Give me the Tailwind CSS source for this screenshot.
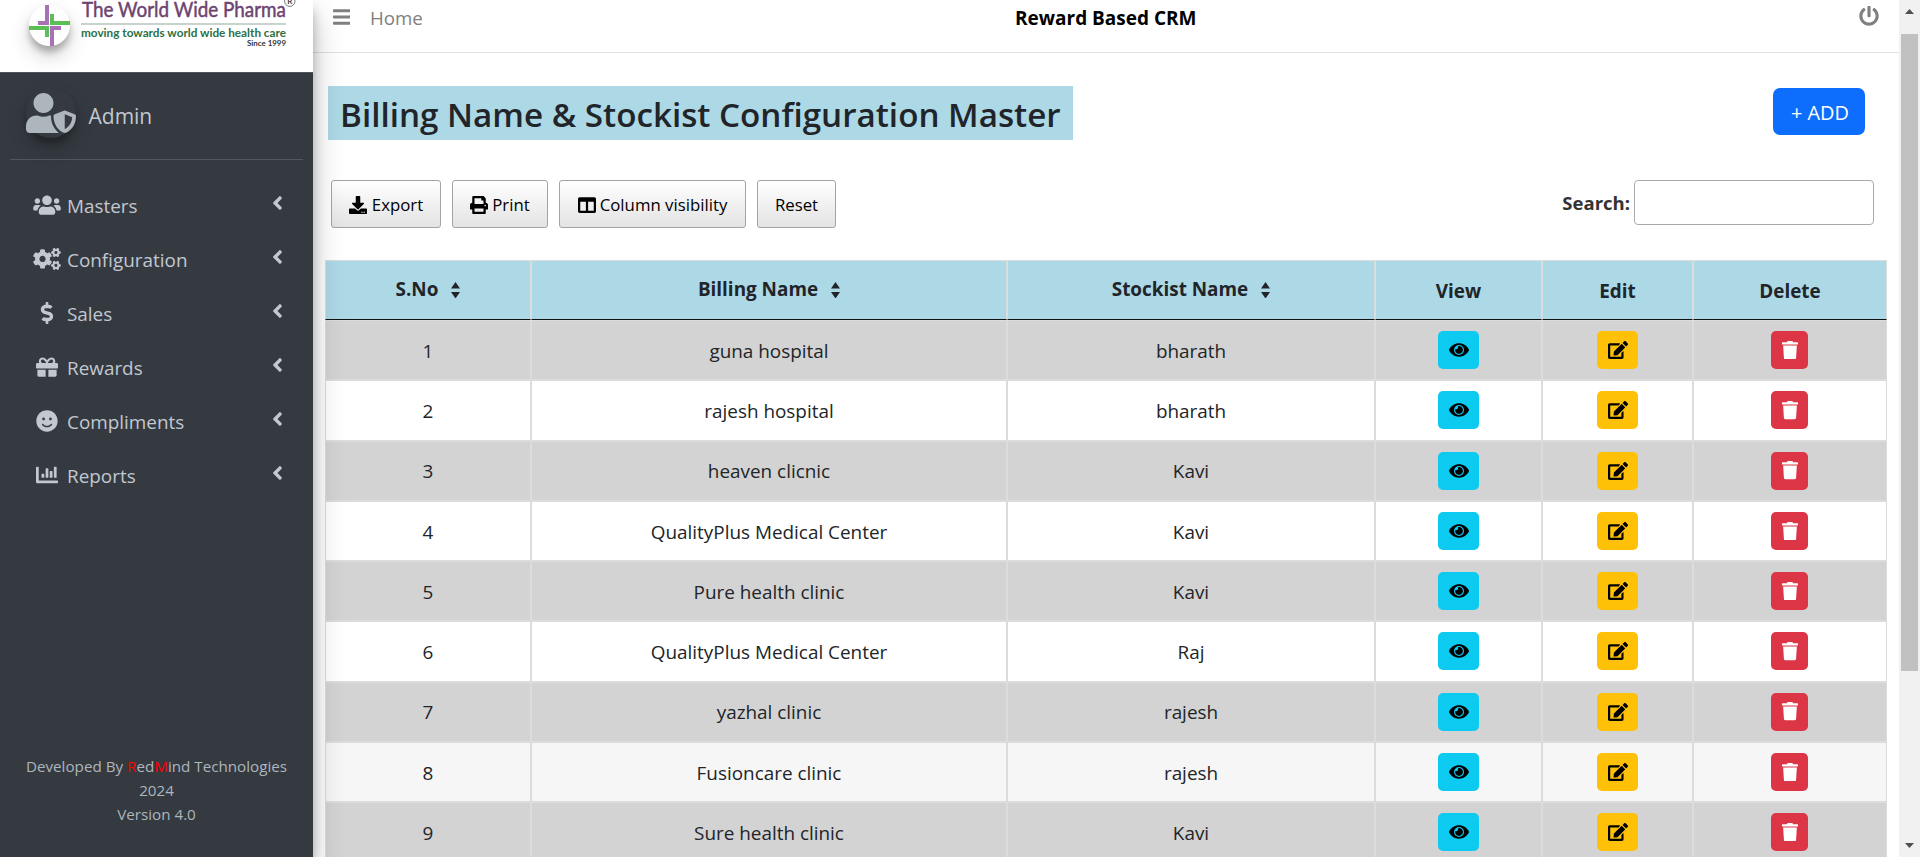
<!DOCTYPE html>
<html lang="en">
<head>
<meta charset="utf-8">
<title>Reward Based CRM</title>
<script src="https://cdn.jsdelivr.net/npm/@tailwindcss/browser@4"></script>
</head>
<body class="h-[857px] overflow-hidden bg-white font-['Open_Sans','Noto_Sans',sans-serif] text-[18.9px] text-[#212529]">

<!-- Icon sprite -->
<svg class="hidden">
  <symbol id="users" viewBox="0 0 640 512"><path d="M96 224c35.3 0 64-28.7 64-64s-28.7-64-64-64-64 28.7-64 64 28.7 64 64 64zm448 0c35.3 0 64-28.7 64-64s-28.7-64-64-64-64 28.7-64 64 28.7 64 64 64zm32 32h-64c-17.6 0-33.5 7.1-45.1 18.6 40.3 22.1 68.9 62 75.1 109.4h66c17.7 0 32-14.3 32-32v-32c0-35.3-28.7-64-64-64zm-256 0c61.9 0 112-50.1 112-112S381.9 32 320 32 208 82.1 208 144s50.1 112 112 112zm76.8 32h-8.3c-20.8 10-43.9 16-68.5 16s-47.6-6-68.5-16h-8.3C179.6 288 128 339.6 128 403.2V432c0 26.5 21.5 48 48 48h288c26.5 0 48-21.5 48-48v-28.8c0-63.6-51.6-115.2-115.2-115.2zm-223.7-13.4C161.5 263.1 145.6 256 128 256H64c-35.3 0-64 28.7-64 64v32c0 17.7 14.3 32 32 32h65.9c6.3-47.4 34.9-87.3 75.2-109.4z"/></symbol>
  <symbol id="cogs" viewBox="0 0 640 512">
    <path id="smallgear" d="M512.1 191l-8.2 14.3c-3 5.3-9.4 7.5-15.1 5.4-11.8-4.4-22.6-10.7-32.1-18.6-4.6-3.8-5.8-10.5-2.8-15.7l8.2-14.3c-6.9-8-12.3-17.3-15.9-27.4h-16.5c-6 0-11.2-4.3-12.2-10.3-2-12-2.1-24.6 0-37.1 1-6 6.2-10.4 12.2-10.4h16.5c3.6-10.1 9-19.4 15.9-27.4l-8.2-14.3c-3-5.2-1.9-11.9 2.8-15.7 9.5-7.9 20.4-14.2 32.1-18.6 5.7-2.1 12.1.1 15.1 5.4l8.2 14.3c10.5-1.9 21.2-1.9 31.7 0L552 6.3c3-5.3 9.4-7.5 15.1-5.4 11.8 4.4 22.6 10.7 32.1 18.6 4.6 3.8 5.8 10.5 2.8 15.7l-8.2 14.3c6.9 8 12.3 17.3 15.9 27.4h16.5c6 0 11.2 4.3 12.2 10.3 2 12 2.1 24.6 0 37.1-1 6-6.2 10.4-12.2 10.4h-16.5c-3.6 10.1-9 19.4-15.9 27.4l8.2 14.3c3 5.2 1.9 11.9-2.8 15.7-9.5 7.9-20.4 14.2-32.1 18.6-5.7 2.1-12.1-.1-15.1-5.4l-8.2-14.3c-10.4 1.9-21.2 1.9-31.7 0zm-10.5-58.8c38.5 29.6 82.4-14.3 52.8-52.8-38.5-29.7-82.4 14.3-52.8 52.8z"/>
    <path d="M386.3 286.1l33.7 16.8c10.1 5.8 14.5 18.1 10.5 29.1-8.9 24.2-26.4 46.4-42.6 65.8-7.4 8.9-20.2 11.1-30.3 5.3l-29.1-16.8c-16 13.7-34.6 24.6-54.9 31.7v33.6c0 11.6-8.3 21.6-19.7 23.6-24.6 4.2-50.4 4.4-75.9 0-11.5-2-20-11.9-20-23.6V418c-20.3-7.2-38.9-18-54.9-31.7L74 403c-10 5.8-22.9 3.6-30.3-5.3-16.2-19.4-33.3-41.6-42.2-65.7-4-10.9.4-23.2 10.5-29.1l33.3-16.8c-3.9-20.9-3.9-42.4 0-63.4L12 205.8c-10.1-5.8-14.6-18.1-10.5-29 8.9-24.2 26-46.4 42.2-65.8 7.4-8.9 20.2-11.1 30.3-5.3l29.1 16.8c16-13.7 34.6-24.6 54.9-31.7V57.1c0-11.5 8.2-21.5 19.6-23.5 24.6-4.2 50.5-4.4 76-.1 11.5 2 20 11.9 20 23.6v33.6c20.3 7.2 38.9 18 54.9 31.7l29.1-16.8c10-5.8 22.9-3.6 30.3 5.3 16.2 19.4 33.2 41.6 42.1 65.8 4 10.9.1 23.2-10 29.1l-33.7 16.8c3.9 21 3.9 42.5 0 63.5zm-117.6 21.1c59.2-77-28.7-164.9-105.7-105.7-59.2 77 28.7 164.9 105.7 105.7z"/>
    <use href="#smallgear" y="299"/>
  </symbol>
  <symbol id="dollar" viewBox="0 0 288 512"><path d="M209.2 233.4l-108-31.6C88.7 198.2 80 186.5 80 173.5c0-16.3 13.2-29.5 29.5-29.5h66.3c12.2 0 24.2 3.7 34.2 10.5 6.1 4.1 14.3 3.1 19.5-2l34.8-34c7.1-6.9 6.1-18.4-1.8-24.5C238 74.8 207.4 64.1 176 64V16c0-8.8-7.2-16-16-16h-32c-8.8 0-16 7.2-16 16v48h-2.5C45.8 64-5.4 118.7.5 183.6c4.2 46.1 39.4 83.6 83.8 96.6l102.5 30c12.5 3.7 21.2 15.3 21.2 28.3 0 16.3-13.2 29.5-29.5 29.5h-66.3C100 368 88 364.3 78 357.5c-6.1-4.1-14.3-3.1-19.5 2l-34.8 34c-7.1 6.9-6.1 18.4 1.8 24.5 24.5 19.2 55.1 29.9 86.5 30v48c0 8.8 7.2 16 16 16h32c8.8 0 16-7.2 16-16v-48.2c46.6-.9 90.3-28.6 105.7-72.7 21.5-61.6-14.6-124.8-72.5-141.7z"/></symbol>
  <symbol id="gift" viewBox="0 0 512 512"><path d="M32 448c0 17.7 14.3 32 32 32h160V320H32v128zm256 32h160c17.7 0 32-14.3 32-32V320H288v160zm192-320h-42.1c6.2-12.1 10.1-25.5 10.1-40 0-48.5-39.5-88-88-88-41.6 0-68.5 21.3-103 68.3-34.5-47-61.4-68.3-103-68.3-48.5 0-88 39.5-88 88 0 14.5 3.8 27.9 10.1 40H32c-17.7 0-32 14.3-32 32v80c0 8.8 7.2 16 16 16h480c8.8 0 16-7.2 16-16v-80c0-17.7-14.3-32-32-32zm-326.1 0c-22.1 0-40-17.9-40-40s17.9-40 40-40c19.9 0 34.6 3.3 86.1 80h-86.1zm206.1 0h-86.1c51.4-76.5 65.7-80 86.1-80 22.1 0 40 17.9 40 40s-17.9 40-40 40z"/></symbol>
  <symbol id="smile" viewBox="0 0 496 512"><path d="M248 8C111 8 0 119 0 256s111 248 248 248 248-111 248-248S385 8 248 8zm80 168c17.7 0 32 14.3 32 32s-14.3 32-32 32-32-14.3-32-32 14.3-32 32-32zm-160 0c17.7 0 32 14.3 32 32s-14.3 32-32 32-32-14.3-32-32 14.3-32 32-32zm194.8 170.2C334.3 380.4 292.5 400 248 400s-86.3-19.6-114.8-53.8c-13.6-16.3 11-36.7 24.6-20.5 22.4 26.9 55.2 42.2 90.2 42.2s67.8-15.4 90.2-42.2c13.4-16.2 38.1 4.2 24.6 20.5z"/></symbol>
  <symbol id="chart" viewBox="0 0 512 512"><path d="M332.8 320h38.4c6.4 0 12.8-6.4 12.8-12.8V172.8c0-6.4-6.4-12.8-12.8-12.8h-38.4c-6.4 0-12.8 6.4-12.8 12.8v134.4c0 6.4 6.4 12.8 12.8 12.8zm96 0h38.4c6.4 0 12.8-6.4 12.8-12.8V76.8c0-6.4-6.4-12.8-12.8-12.8h-38.4c-6.4 0-12.8 6.4-12.8 12.8v230.4c0 6.4 6.4 12.8 12.8 12.8zm-288 0h38.4c6.4 0 12.8-6.4 12.8-12.8v-70.4c0-6.4-6.4-12.8-12.8-12.8h-38.4c-6.4 0-12.8 6.4-12.8 12.8v70.4c0 6.4 6.4 12.8 12.8 12.8zm96 0h38.4c6.4 0 12.8-6.4 12.8-12.8V108.8c0-6.4-6.4-12.8-12.8-12.8h-38.4c-6.4 0-12.8 6.4-12.8 12.8v198.4c0 6.4 6.4 12.8 12.8 12.8zM496 384H64V80c0-8.84-7.16-16-16-16H16C7.16 64 0 71.16 0 80v336c0 17.67 14.33 32 32 32h464c8.84 0 16-7.16 16-16v-32c0-8.84-7.16-16-16-16z"/></symbol>
  <symbol id="angle" viewBox="0 0 256 512"><path d="M31.7 239l136-136c9.4-9.4 24.6-9.4 33.9 0l22.6 22.6c9.4 9.4 9.4 24.6 0 33.9L127.9 256l96.4 96.4c9.4 9.4 9.4 24.6 0 33.9L201.7 409c-9.4 9.4-24.6 9.4-33.9 0l-136-136c-9.5-9.4-9.5-24.6-.1-34z"/></symbol>
  <symbol id="power" viewBox="0 0 512 512"><path d="M400 54.1c63 45 104 118.6 104 201.9 0 136.8-110.8 247.7-247.5 248C120 504.3 8.2 393 8 256.4 7.9 173.1 48.9 99.3 111.8 54.2c11.7-8.3 28-4.8 35 7.7L162.6 90c5.9 10.5 3.1 23.8-6.6 31-41.5 30.8-68 79.6-68 134.9-.1 92.3 74.5 168.1 168 168.1 91.6 0 168.6-74.2 168-169.1-.3-51.8-24.7-101.8-68.1-134-9.7-7.2-12.4-20.5-6.5-30.9l15.8-28.1c7-12.4 23.2-16.1 34.8-7.8zM296 264V24c0-13.3-10.7-24-24-24h-32c-13.3 0-24 10.7-24 24v240c0 13.3 10.7 24 24 24h32c13.3 0 24-10.7 24-24z"/></symbol>
  <symbol id="shield" viewBox="0 0 640 512"><path d="M622.3 271.1l-115.2-45c-4.1-1.6-12.6-3.7-22.2 0l-115.2 45c-10.7 4.2-17.7 14-17.7 24.9 0 111.6 68.7 188.8 132.9 213.9 9.6 3.7 18 1.6 22.2 0C558.4 489.9 640 420.5 640 296c0-10.9-7-20.7-17.7-24.9zM496 462.4V273.3l95.5 37.3c-5.6 87.1-60.9 135.4-95.5 151.8zM224 256c70.7 0 128-57.3 128-128S294.7 0 224 0 96 57.3 96 128s57.3 128 128 128zm96 40c0-2.5.8-4.8 1.1-7.2-2.5-.1-4.9-.8-7.5-.8h-16.7c-22.2 10.2-46.9 16-72.9 16s-50.6-5.8-72.9-16h-16.7C60.2 288 0 348.2 0 422.4V464c0 26.5 21.5 48 48 48h352c6.8 0 13.3-1.5 19.2-4-54-42.9-99.2-116.7-99.2-212z"/></symbol>
  <symbol id="eye" viewBox="0 0 576 512"><path d="M288 144a110.94 110.94 0 0 0-31.24 5 55.4 55.4 0 0 1 7.24 27 56 56 0 0 1-56 56 55.4 55.4 0 0 1-27-7.24A111.71 111.71 0 1 0 288 144zm284.52 97.4C518.29 135.59 410.93 64 288 64S57.68 135.64 3.48 241.41a32.35 32.35 0 0 0 0 29.19C57.71 376.41 165.07 448 288 448s230.32-71.64 284.52-177.41a32.35 32.35 0 0 0 0-29.19zM288 400a144 144 0 1 1 144-144 143.93 143.93 0 0 1-144 144z"/></symbol>
  <symbol id="edit" viewBox="0 0 576 512"><path d="M402.6 83.2l90.2 90.2c3.8 3.8 3.8 10 0 13.8L274.4 405.6l-92.8 10.3c-12.4 1.4-22.9-9.1-21.5-21.5l10.3-92.8L388.8 83.2c3.8-3.8 10-3.8 13.8 0zm162-22.9l-48.8-48.8c-15.2-15.2-39.9-15.2-55.2 0l-35.4 35.4c-3.8 3.8-3.8 10 0 13.8l90.2 90.2c3.8 3.8 10 3.8 13.8 0l35.4-35.4c15.2-15.3 15.2-40 0-55.2zM384 346.2V448H64V128h229.8c3.2 0 6.2-1.3 8.5-3.5l40-40c7.6-7.6 2.2-20.5-8.5-20.5H48C21.5 64 0 85.5 0 112v352c0 26.5 21.5 48 48 48h352c26.5 0 48-21.5 48-48V306.2c0-10.7-12.9-16-20.5-8.5l-40 40c-2.2 2.3-3.5 5.3-3.5 8.5z"/></symbol>
  <symbol id="trash" viewBox="0 0 448 512"><path d="M432 32H312l-9.4-18.700A24 24 0 0 0 281.1 0H166.800a23.720 23.720 0 0 0-21.400 13.300L136 32H16A16 16 0 0 0 0 48v32a16 16 0 0 0 16 16h416a16 16 0 0 0 16-16V48a16 16 0 0 0-16-16zM32 122l21.200 345a48 48 0 0 0 47.900 45h245.800a48 48 0 0 0 47.900-45L416 122H32z"/></symbol>
  <symbol id="download" viewBox="0 0 512 512"><path d="M216 0h80c13.3 0 24 10.7 24 24v168h87.7c17.8 0 26.7 21.5 14.1 34.1L269.7 378.3c-7.5 7.5-19.8 7.5-27.3 0L90.1 226.1c-12.6-12.6-3.7-34.1 14.1-34.1H192V24c0-13.3 10.7-24 24-24zm296 376v112c0 13.3-10.7 24-24 24H24c-13.3 0-24-10.7-24-24V376c0-13.3 10.7-24 24-24h146.7l49 49c20.1 20.1 52.5 20.1 72.6 0l49-49H488c13.3 0 24 10.7 24 24zm-124 88c0-11-9-20-20-20s-20 9-20 20 9 20 20 20 20-9 20-20zm64 0c0-11-9-20-20-20s-20 9-20 20 9 20 20 20 20-9 20-20z"/></symbol>
  <symbol id="print" viewBox="0 0 512 512"><path d="M448 192V77.25c0-8.49-3.37-16.62-9.37-22.63L393.37 9.37c-6-6-14.14-9.37-22.63-9.37H96C78.33 0 64 14.33 64 32v160c-35.35 0-64 28.65-64 64v112c0 8.84 7.16 16 16 16h48v96c0 17.67 14.33 32 32 32h320c17.67 0 32-14.33 32-32v-96h48c8.84 0 16-7.16 16-16V256c0-35.35-28.65-64-64-64zm-64 256H128v-96h256v96zm0-224H128V64h192v48c0 8.84 7.16 16 16 16h48v96zm48 72c-13.25 0-24-10.75-24-24 0-13.26 10.75-24 24-24s24 10.74 24 24c0 13.25-10.75 24-24 24z"/></symbol>
  <symbol id="columns" viewBox="0 0 512 512"><path d="M464 32H48C21.49 32 0 53.49 0 80v352c0 26.51 21.49 48 48 48h416c26.51 0 48-21.49 48-48V80c0-26.51-21.49-48-48-48zM224 416H64V160h160v256zm224 0H288V160h160v256z"/></symbol>
  <symbol id="bars" viewBox="0 0 448 512"><path d="M16 132h416c8.837 0 16-7.163 16-16V76c0-8.837-7.163-16-16-16H16C7.163 60 0 67.163 0 76v40c0 8.837 7.163 16 16 16zm0 160h416c8.837 0 16-7.163 16-16v-40c0-8.837-7.163-16-16-16H16c-8.837 0-16 7.163-16 16v40c0 8.837 7.163 16 16 16zm0 160h416c8.837 0 16-7.163 16-16v-40c0-8.837-7.163-16-16-16H16c-8.837 0-16 7.163-16 16v40c0 8.837 7.163 16 16 16z"/></symbol>
</svg>

<div class="flex h-full">
  <!-- Sidebar -->
  <aside class="relative z-10 flex h-full w-[313px] shrink-0 flex-col bg-[#343a40] shadow-[0_14px_28px_rgba(0,0,0,0.25),0_10px_10px_rgba(0,0,0,0.22)]">
    <div class="flex h-[73px] shrink-0 overflow-hidden border-b border-[#4b545c] bg-white pl-[29px]">
      <div class="mt-[5px] size-[41px] rounded-full bg-white shadow-[0_10px_20px_rgba(0,0,0,0.19),0_6px_6px_rgba(0,0,0,0.23)]">
        <svg class="size-[41px]" viewBox="0 0 41 41">
          <path fill="#a871b5" d="M16 0h4v20H9v-4h7zM21 21h11v4h-7v16h-4z"/>
          <path fill="#5cbf55" d="M21 9h4v7h16v4H21zM0 21h20v11h-4v-7H0z"/>
        </svg>
      </div>
      <svg class="ml-[11px] h-[60px] w-[220px] font-['Lato',sans-serif]" viewBox="0 0 220 60">
        <text x="1" y="16.5" font-size="22" font-weight="400" fill="#6d4470" stroke="#6d4470" stroke-width=".5" textLength="204" lengthAdjust="spacingAndGlyphs">The World Wide Pharma</text>
        <circle cx="208.8" cy="1.2" r="5.2" fill="none" stroke="#555" stroke-width=".8"/>
        <text x="206.3" y="4.2" font-size="8" font-weight="700" fill="#444">R</text>
        <path d="M0 24h205" stroke="#93a79b" stroke-width="1"/>
        <text x="0" y="36.5" font-size="12" font-weight="700" fill="#2c7145" textLength="205" lengthAdjust="spacingAndGlyphs">moving towards world wide health care</text>
        <text x="166" y="46" font-size="8" font-weight="700" fill="#333" textLength="39" lengthAdjust="spacingAndGlyphs">Since 1999</text>
      </svg>
    </div>

    <div class="mx-[10px] flex h-[87px] shrink-0 items-center border-b border-[#4f5962] pl-4 text-[#c2c7d0]">
      <div class="-mt-[6px] flex size-[50px] items-center justify-center rounded-full text-[#adb5bd] shadow-[0_10px_20px_rgba(0,0,0,0.19),0_6px_6px_rgba(0,0,0,0.23)]">
        <svg class="h-10 w-[50px]" fill="currentColor"><use href="#shield"/></svg>
      </div>
      <span class="mt-[2px] ml-[12.5px] text-[21px]">Admin</span>
    </div>

    <nav id="menu" class="mt-[19px] flex flex-col text-[#c2c7d0]"></nav>

    <footer class="mt-auto mb-[31px] text-center text-[15.2px] leading-6 text-[#adb5bd]">
      <p>Developed By <span class="text-[#ff0000]">R</span>ed<span class="text-[#ff0000]">M</span>ind Technologies</p>
      <p>2024</p>
      <p>Version 4.0</p>
    </footer>
  </aside>

  <!-- Main column -->
  <main class="flex h-full w-[1586px] shrink-0 flex-col overflow-hidden">
    <header class="flex h-[53px] shrink-0 justify-between border-b border-[#dee2e6] pr-5 pl-[19.5px] text-[#808080]">
      <div class="flex h-9 w-[682.500px] items-center gap-5">
        <svg class="-mt-[3px] h-5 w-[17.5px]" fill="currentColor"><use href="#bars"/></svg>
        <span class="text-[18.7px]">Home</span>
      </div>
      <h1 class="h-9 flex-1 text-[19px] leading-9 font-bold text-black">Reward Based CRM</h1>
      <svg class="mt-[6px] size-5" fill="currentColor"><use href="#power"/></svg>
    </header>

    <div class="flex shrink-0 items-start justify-between pt-[33px] pr-[34px] pl-[15px]">
      <h2 class="h-[54px] w-[745px] bg-[#add8e6] px-[12px] text-[33.2px] leading-[57px] font-semibold whitespace-nowrap">Billing Name &amp; Stockist Configuration Master</h2>
      <button class="mt-[2px] h-[47px] w-[92px] rounded-[7px] bg-[#0d6efd] pt-[2px] pl-[2px] text-[19.9px] text-white">+ ADD</button>
    </div>

    <div class="mt-[40px] flex shrink-0 justify-between pr-[25px] pl-[18px] text-[16.8px] text-black">
      <div class="flex gap-[11px]">
        <button class="flex h-12 w-[110px] items-center justify-center gap-[5px] rounded-[3px] border border-[#a3a3a3] bg-linear-to-b from-white to-[#e3e3e3] pt-px"><svg class="size-[18px]" fill="currentColor"><use href="#download"/></svg>Export</button>
        <button class="flex h-12 w-[96px] items-center justify-center gap-[4px] rounded-[3px] border border-[#a3a3a3] bg-linear-to-b from-white to-[#e3e3e3] pt-px"><svg class="size-[18px]" fill="currentColor"><use href="#print"/></svg>Print</button>
        <button class="flex h-12 w-[187px] items-center justify-center gap-[4px] rounded-[3px] border border-[#a3a3a3] bg-linear-to-b from-white to-[#e3e3e3] pt-px"><svg class="size-[18px]" fill="currentColor"><use href="#columns"/></svg>Column visibility</button>
        <button class="flex h-12 w-[79px] items-center justify-center rounded-[3px] border border-[#a3a3a3] bg-linear-to-b from-white to-[#e3e3e3] pt-px">Reset</button>
      </div>
      <label class="flex h-[45px] items-center gap-[4px] text-[18.5px] font-bold text-[#333]"><span class="mt-px">Search:</span>
        <input class="h-[45px] w-60 rounded-[4px] border border-[#aaa] bg-transparent">
      </label>
    </div>

    <div id="table" class="mt-8 ml-[12px] w-[1562px] shrink-0"></div>
  </main>

  <!-- Page scrollbar -->
  <div class="flex h-full w-[21px] shrink-0 flex-col items-center bg-[#f1f1f1]">
    <svg class="h-[34px] w-[21px] shrink-0" fill="#505050"><path d="M6 14l4.5-5 4.5 5z"/></svg>
    <div class="h-[637px] w-[17px] bg-[#c1c1c1]"></div>
    <svg class="mt-auto h-[22px] w-[21px]" fill="#505050"><path d="M6 8h9l-4.5 5z"/></svg>
  </div>
</div>

<script>
  const icon = (id, cls) => `<svg class="${cls}" fill="currentColor"><use href="#${id}"/></svg>`;

  document.getElementById('menu').innerHTML = [
    ['users', 'Masters'], ['cogs', 'Configuration'], ['dollar', 'Sales'],
    ['gift', 'Rewards'], ['smile', 'Compliments'], ['chart', 'Reports'],
  ].map(([id, label]) => `
    <a class="flex h-[54px] items-center pr-[30px] pl-[33px]">
      ${icon(id, '-mt-[2px] h-[22px] w-7')}
      <span class="ml-[6px] flex-1">${label}</span>
      ${icon('angle', '-mt-[6px] h-[22px] w-[11px]')}
    </a>`).join('');

  const sort = '<svg class="ml-[13px] h-4 w-[9px]" fill="currentColor"><path d="M4.5 0L9 6.500H0zM0 10h9l-4.500 6.500z"/></svg>';
  const grid = 'grid grid-cols-[206px_476px_368px_167px_151px_194px]';
  const heads = ['S.No', 'Billing Name', 'Stockist Name', 'View', 'Edit', 'Delete'];
  const rows = [
    ['guna hospital', 'bharath'], ['rajesh hospital', 'bharath'], ['heaven clicnic', 'Kavi'],
    ['QualityPlus Medical Center', 'Kavi'], ['Pure health clinic', 'Kavi'],
    ['QualityPlus Medical Center', 'Raj'], ['yazhal clinic', 'rajesh'],
    ['Fusioncare clinic', 'rajesh'], ['Sure health clinic', 'Kavi'],
  ];
  const cell = 'flex items-center justify-center border border-[#dcdcdc]';

  const head = heads.map((h, i) => `
    <div class="${cell} border-b-[#111] ${i < 3 ? 'pb-px' : 'pt-[3px]'}">${h}${i < 3 ? sort : ''}</div>`).join('');

  const body = rows.map(([billing, stockist], i) => `
    <div class="${grid} h-[60.25px] ${i === 7 ? 'bg-[#f6f6f6]' : i % 2 ? 'bg-white' : 'bg-[#d3d3d3]'}">
      <div class="${cell} pt-[2px]">${i + 1}</div>
      <div class="${cell} pt-[2px]">${billing}</div>
      <div class="${cell} pt-[2px]">${stockist}</div>
      <div class="${cell}"><button class="flex h-[38px] w-[41px] items-center justify-center rounded-[5px] bg-[#0dcaf0] text-black">${icon('eye', 'h-[18px] w-5')}</button></div>
      <div class="${cell}"><button class="flex h-[38px] w-[41px] items-center justify-center rounded-[5px] bg-[#ffc107] text-black">${icon('edit', 'h-[18px] w-5')}</button></div>
      <div class="${cell} pr-px"><button class="flex h-[38px] w-[37px] items-center justify-center rounded-[5px] bg-[#dc3545] text-white">${icon('trash', 'h-[18.5px] w-4')}</button></div>
    </div>`).join('');

  document.getElementById('table').innerHTML =
    `<div class="${grid} h-[60px] bg-[#add8e6] font-bold">${head}</div>${body}`;
</script>
</body>
</html>
